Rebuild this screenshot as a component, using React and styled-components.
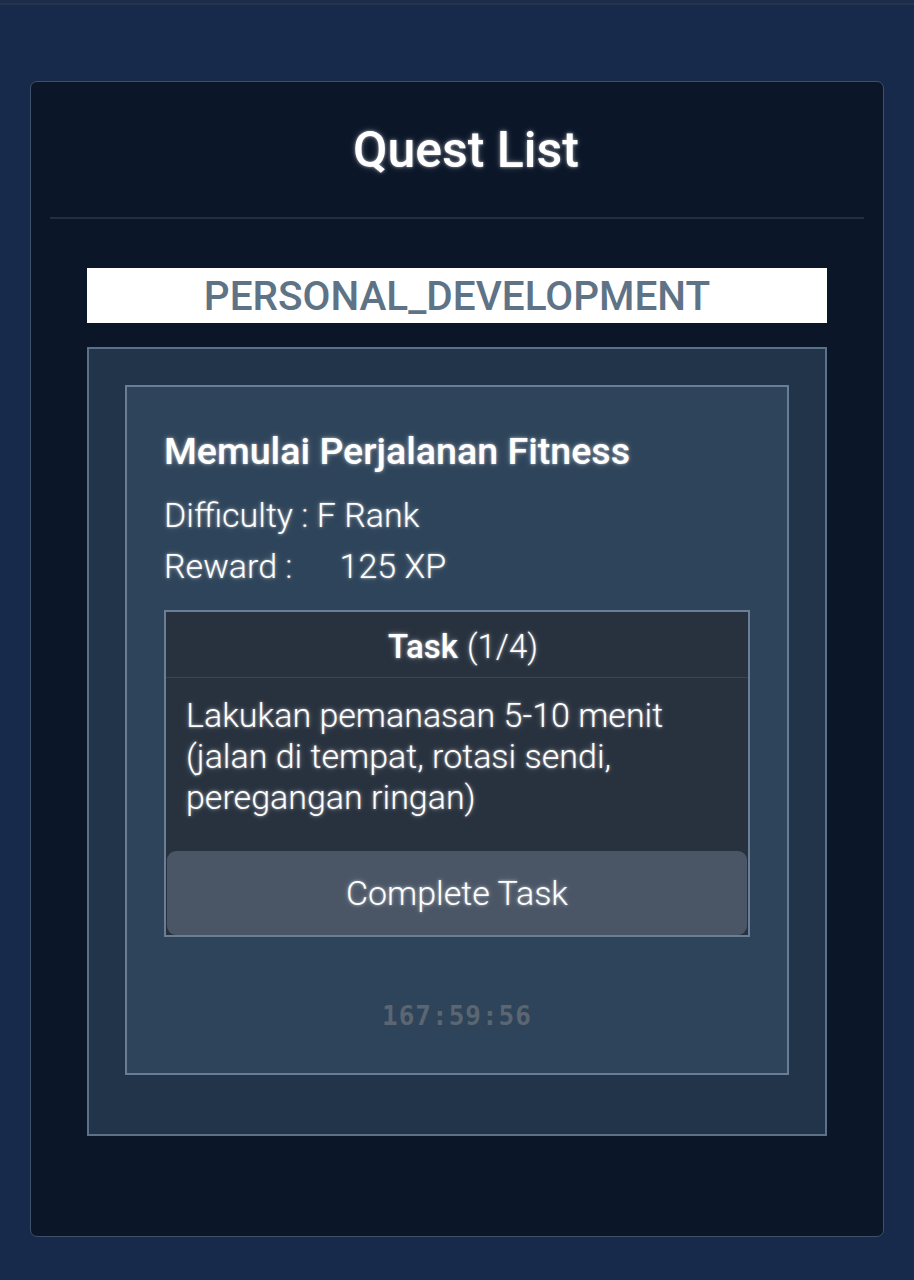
import React from 'react'
import styled, { createGlobalStyle } from 'styled-components'

const GlobalStyle = createGlobalStyle`
  html, body {
    margin: 0;
    padding: 0;
    background: #182a4b;
    font-family: Roboto, "Noto Sans", sans-serif;
  }
  * {
    box-sizing: border-box;
  }
`

const glow = '0 0 3px rgba(255, 255, 255, 0.6), 0 0 7px rgba(255, 255, 255, 0.25)'

const quest = {
  category: 'PERSONAL_DEVELOPMENT',
  title: 'Memulai Perjalanan Fitness',
  difficulty: 'F Rank',
  reward: '125 XP',
  taskIndex: 1,
  taskCount: 4,
  task: 'Lakukan pemanasan 5-10 menit (jalan di tempat, rotasi sendi, peregangan ringan)',
  timeLeft: '167:59:56',
}

export default function App() {
  return (
    <Page>
      <GlobalStyle />
      <TopLine />
      <Panel>
        <Header>
          <Title>Quest List</Title>
        </Header>
        <Divider />
        <Body>
          <Category>{quest.category}</Category>
          <Group>
            <QuestCard>
              <QuestTitle>{quest.title}</QuestTitle>
              <Meta>
                <MetaRow>Difficulty : {quest.difficulty}</MetaRow>
                <MetaRow>
                  Reward :<RewardValue>{quest.reward}</RewardValue>
                </MetaRow>
              </Meta>
              <TaskBox>
                <TaskHeader>
                  <strong>Task</strong> ({quest.taskIndex}/{quest.taskCount})
                </TaskHeader>
                <TaskText>{quest.task}</TaskText>
                <CompleteButton>Complete Task</CompleteButton>
              </TaskBox>
              <Timer>{quest.timeLeft}</Timer>
            </QuestCard>
          </Group>
        </Body>
      </Panel>
    </Page>
  )
}

const Page = styled.div`
  min-height: 1280px;
  padding: 0 30px 43px;
  display: flex;
  flex-direction: column;
`

const TopLine = styled.div`
  height: 5px;
  margin: 0 -30px 76px;
  border-bottom: 2px solid #26344d;
  background: #1c2c4b;
`

const Panel = styled.div`
  flex: 1;
  background: #0b1729;
  border: 1px solid #3f5069;
  border-radius: 7px;
  padding: 0 19px;
  display: flex;
  flex-direction: column;
`

const Header = styled.div`
  height: 135px;
  padding-left: 18px;
  display: flex;
  align-items: center;
  justify-content: center;
`

const Title = styled.h1`
  margin: 0;
  font-size: 50px;
  font-weight: 500;
  color: #ffffff;
  text-shadow: ${glow};
`

const Divider = styled.div`
  height: 2px;
  background: #232f40;
`

const Body = styled.div`
  padding: 49px 37px 0;
  display: flex;
  flex-direction: column;
`

const Category = styled.div`
  height: 55px;
  background: #ffffff;
  color: #5f7386;
  font-size: 40.5px;
  font-weight: 500;
  display: flex;
  align-items: center;
  justify-content: center;
  margin-bottom: 24px;
`

const Group = styled.div`
  background: #213449;
  border: 2px solid #5b7089;
  padding: 36px 36px 59px;
`

const QuestCard = styled.div`
  background: #2e445a;
  border: 2px solid #687e96;
  padding: 40px 37px 0;
  height: 690px;
  display: flex;
  flex-direction: column;
`

const QuestTitle = styled.h2`
  margin: 0;
  font-size: 37.6px;
  font-weight: 500;
  line-height: 48px;
  color: #ffffff;
  text-shadow: ${glow};
`

const Meta = styled.div`
  margin-top: 15px;
  display: flex;
  flex-direction: column;
`

const MetaRow = styled.div`
  font-size: 34px;
  font-weight: 300;
  line-height: 51px;
  color: #ffffff;
  text-shadow: ${glow};
`

const RewardValue = styled.span`
  margin-left: 47px;
`

const TaskBox = styled.div`
  margin-top: 18px;
  background: #28323f;
  border: 2px solid #6a7e95;
  display: flex;
  flex-direction: column;
`

const TaskHeader = styled.div`
  height: 66px;
  border-bottom: 1px solid #394454;
  display: flex;
  align-items: center;
  justify-content: center;
  gap: 9px;
  padding: 4px 0 0 12px;
  font-size: 33px;
  font-weight: 300;
  color: #ffffff;
  text-shadow: ${glow};

  strong {
    font-weight: 500;
  }
`

const TaskText = styled.p`
  margin: 0;
  padding: 17px 20px 33px;
  font-size: 34px;
  font-weight: 300;
  line-height: 41px;
  color: #ffffff;
  text-shadow: ${glow};
`

const CompleteButton = styled.button`
  height: 84px;
  margin: 0 1px;
  border: none;
  border-radius: 9px;
  background: #4a5666;
  font-family: Roboto, "Noto Sans", sans-serif;
  font-size: 34px;
  font-weight: 300;
  color: #ffffff;
  text-shadow: ${glow};
`

const Timer = styled.div`
  margin-top: 64px;
  text-align: center;
  font-family: "DejaVu Sans Mono", "Liberation Mono", monospace;
  font-size: 26px;
  font-weight: bold;
  letter-spacing: 1px;
  color: #5b6672;
`
